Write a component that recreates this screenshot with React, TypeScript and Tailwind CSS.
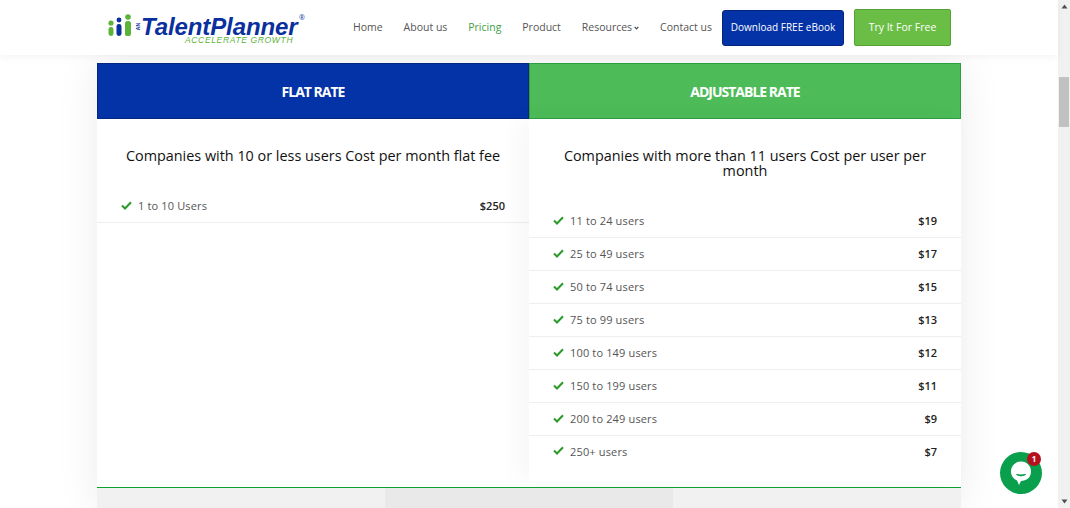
const nav = ["Home", "About us", "Pricing", "Product", "Resources", "Contact us"];
const right: [string, string][] = [
  ["11 to 24 users", "$19"],
  ["25 to 49 users", "$17"],
  ["50 to 74 users", "$15"],
  ["75 to 99 users", "$13"],
  ["100 to 149 users", "$12"],
  ["150 to 199 users", "$11"],
  ["200 to 249 users", "$9"],
  ["250+ users", "$7"],
];

function Check() {
  return (
    <svg width="11" height="9" viewBox="0 0 11 9" className="shrink-0 mt-[-3px]">
      <path d="M1 4.5 L4 7.5 L10 1.2" fill="none" stroke="#2a9a2a" strokeWidth="2" />
    </svg>
  );
}

function Row({ label, price, last }: { label: string; price: string; last?: boolean }) {
  return (
    <div className={`flex items-center pl-6 pr-6 pt-[1px] ${last ? "h-[31px]" : "h-[33px] border-b border-[#eeeeee]"}`}>
      <Check />
      <span className="ml-[6px] text-[11px] tracking-[0.15px] text-[#555555]">{label}</span>
      <span className="ml-auto text-[11px] font-semibold text-[#222222]">{price}</span>
    </div>
  );
}

function Logo() {
  return (
    <div className="relative w-[198px] h-[36px] flex items-start">
      <svg width="28" height="24" viewBox="0 0 28 24" className="mt-[4px] shrink-0">
        <circle cx="4" cy="9" r="2.6" fill="#5cb33a" />
        <rect x="1.5" y="13" width="5" height="9" rx="2.4" fill="#5cb33a" />
        <circle cx="12" cy="6" r="2.4" fill="#0a2f9e" />
        <rect x="9.5" y="10" width="5" height="12" rx="2.4" fill="#0a2f9e" />
        <circle cx="21" cy="3" r="2.8" fill="#5cb33a" />
        <rect x="18" y="7" width="6" height="15" rx="2.6" fill="#5cb33a" />
      </svg>
      <span className="ml-[1px] mt-[13px] text-[5px] leading-none font-bold text-[#0a2f9e] [writing-mode:vertical-rl] rotate-180 font-['Liberation_Sans',sans-serif]">AN</span>
      <span className="ml-0 mt-[7px] h-[20px] text-[24px] leading-[20px] font-bold italic text-[#0a2f9e] tracking-[-0.1px] font-['Liberation_Sans',sans-serif]">TalentPlanner</span>
      <span className="absolute left-[78px] top-[27px] text-[8.5px] leading-[7px] italic tracking-[0.65px] text-[#5cb33a] font-['Liberation_Sans',sans-serif]">ACCELERATE GROWTH</span>
      <span className="absolute left-[192px] top-[4px] text-[7px] leading-none text-[#0a2f9e]">®</span>
    </div>
  );
}

export default function App() {
  return (
    <div className="h-[508px] w-full flex overflow-hidden bg-white font-['Open_Sans',sans-serif]">
      <main className="flex-1 min-w-0 flex flex-col">
        <header className="h-[55px] shrink-0 relative z-10 bg-white shadow-[0_2px_8px_rgba(0,0,0,0.05)] flex items-center pl-[107px]">
          <Logo />
          <nav className="ml-[48px] mt-[1px] w-[359px] flex items-center justify-between text-[10.5px] text-[#555555]">
            {nav.map((n) => (
              <span key={n} className={`flex items-center gap-[2px] ${n === "Pricing" ? "text-[#3f9d42]" : ""}`}>
                {n}
                {n === "Resources" && (
                  <svg width="5" height="4" viewBox="0 0 6 5"><path d="M0.7 1 L3 3.5 L5.3 1" fill="none" stroke="#444" strokeWidth="1.4" /></svg>
                )}
              </span>
            ))}
          </nav>
          <button className="ml-[10px] w-[122px] h-[36px] rounded-[3px] bg-[#0433a8] border border-[#05257a] text-white text-[10px] font-medium">Download FREE eBook</button>
          <button className="ml-[10px] w-[97px] h-[37px] rounded-[2px] bg-[#6abd45] border border-[#55a336] text-white text-[10.5px] font-medium">Try It For Free</button>
        </header>

        <section className="mt-[8px] ml-[97px] w-[864px] flex-1 flex flex-col shadow-[0_0_40px_rgba(0,0,0,0.08)]">
          <div className="flex h-[56px] shrink-0">
            <div className="w-1/2 bg-[#0433a8] border border-[#03277f] flex items-center justify-center text-white text-[14px] font-bold tracking-[-1px]">FLAT RATE</div>
            <div className="w-1/2 bg-[#4dbb58] border border-[#2ba043] flex items-center justify-center text-white text-[14px] font-bold tracking-[-1px]">ADJUSTABLE RATE</div>
          </div>
          <div className="flex h-[368px] shrink-0 bg-white">
            <div className="w-1/2">
              <h2 className="pt-[29px] h-[71px] text-center text-[14.4px] leading-[15px] text-[#111111]">Companies with 10 or less users Cost per month flat fee</h2>
              <Row label="1 to 10 Users" price="$250" />
            </div>
            <div className="w-1/2 h-[363px] bg-white shadow-[-10px_0_24px_rgba(0,0,0,0.035)]">
              <h2 className="pt-[29px] h-[86px] px-[24px] text-center text-[14.4px] leading-[15px] text-[#111111]">Companies with more than 11 users Cost per user per month</h2>
              {right.map(([l, p], i) => (
                <Row key={l} label={l} price={p} last={i === right.length - 1} />
              ))}
            </div>
          </div>
          <div className="h-[1px] shrink-0 bg-[#0ca030]" />
          <div className="flex-1 grid grid-cols-3">
            <div className="bg-[#f1f1f1]" />
            <div className="bg-[#e9e9e9]" />
            <div className="bg-[#f1f1f1]" />
          </div>
        </section>
      </main>

      <aside className="w-[12px] shrink-0 bg-[#f1f1f1] flex flex-col items-center relative">
        <svg width="7" height="5" viewBox="0 0 7 5" className="mt-[4px]"><path d="M3.5 0.5 L6.5 4.5 H0.5 Z" fill="#505050" /></svg>
        <div className="mt-[68px] w-[10px] h-[50px] bg-[#c1c1c1]" />
        <svg width="7" height="5" viewBox="0 0 7 5" className="mt-auto mb-[4px]"><path d="M3.5 4.5 L6.5 0.5 H0.5 Z" fill="#505050" /></svg>
      </aside>

      <div className="absolute left-[1000px] top-[452px] w-[42px] h-[42px] rounded-full bg-[#0a9f4c] flex items-center justify-center">
        <svg width="24" height="26" viewBox="0 0 24 26">
          <path d="M12 1.5 C18 1.5 22 6 22 11.5 C22 17.5 17.5 21 12 21 L10 25 L8 20.5 C4.5 19 2 15.5 2 11.5 C2 6 6 1.5 12 1.5 Z" fill="#fff" />
          <path d="M7.5 14.5 Q12 17.5 16.5 14.5 Q12 15.5 7.5 14.5 Z" fill="#0a9f4c" stroke="#0a9f4c" strokeWidth="1" />
        </svg>
      </div>
      <div className="absolute left-[1027px] top-[452px] w-[14px] h-[14px] rounded-full bg-[#b80f1e] flex items-center justify-center text-white text-[8px] font-bold leading-none">1</div>
    </div>
  );
}
